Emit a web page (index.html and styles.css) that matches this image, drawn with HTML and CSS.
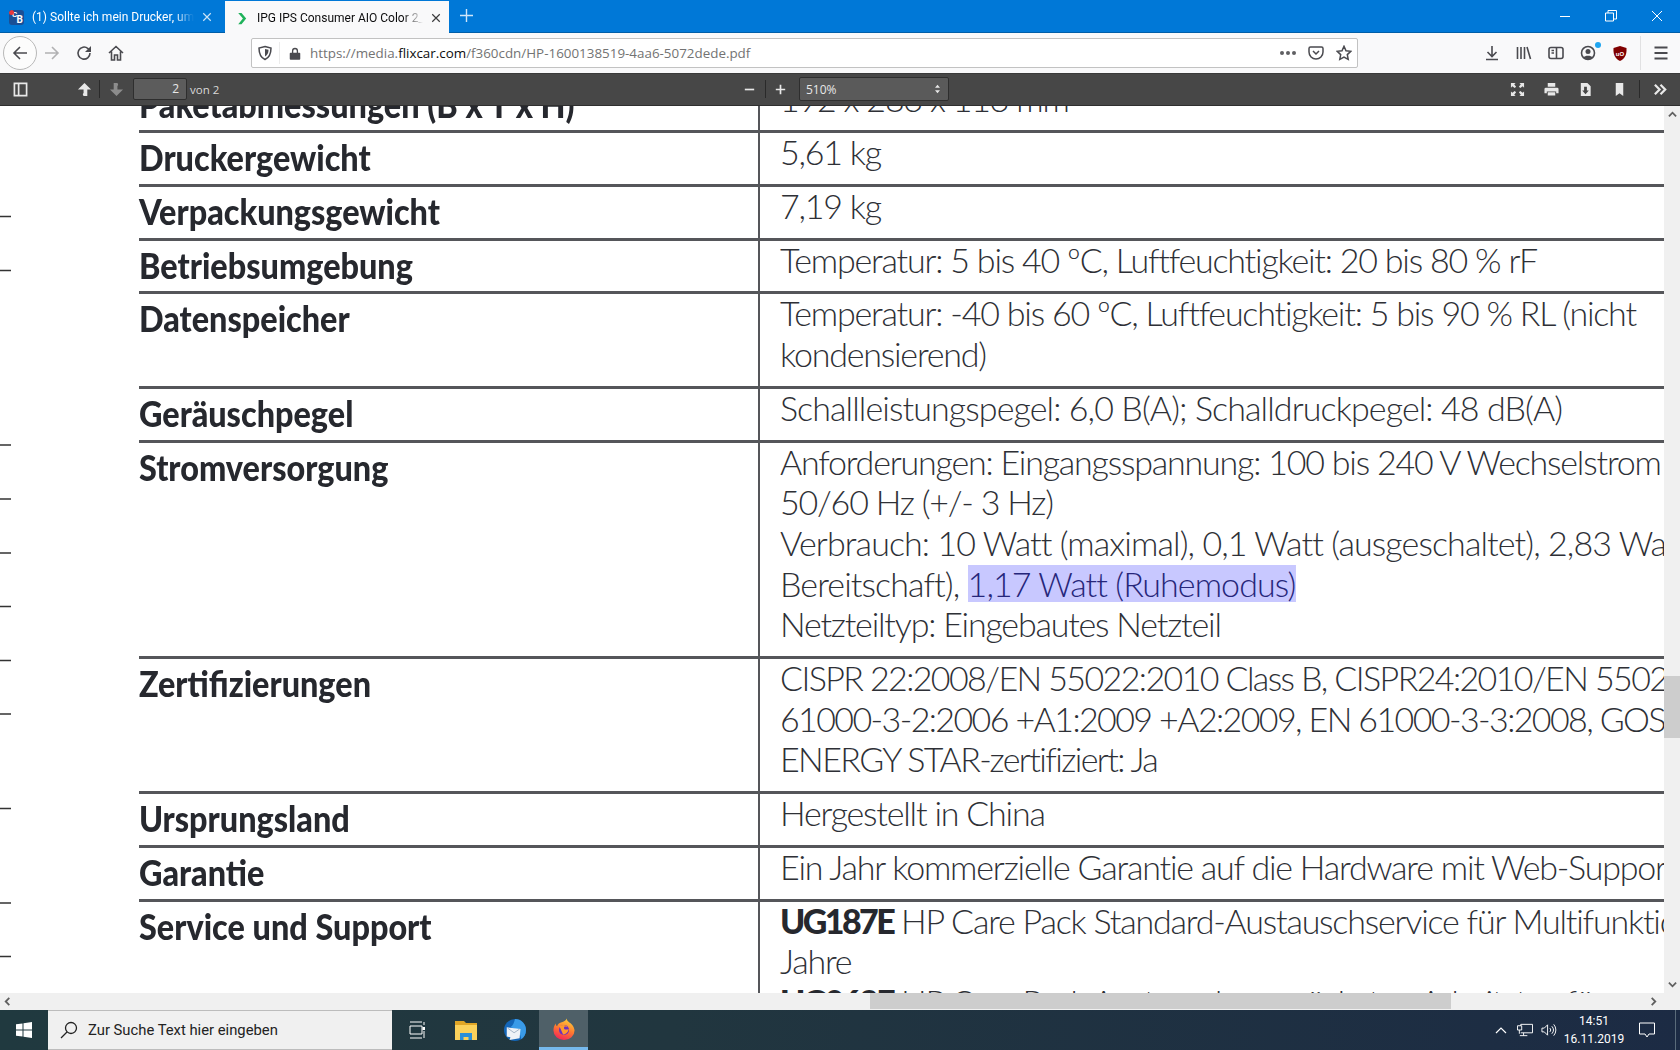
FILE: index.html
```html
<!DOCTYPE html>
<html lang="de">
<head>
    <meta charset="UTF-8">
    <title>IPG IPS Consumer AIO Color</title>
    <link rel="stylesheet" href="styles.css">
</head>
<body>
<div class="window">

    <div class="tabbar">
        <div class="tab">
            <span class="favicon-cb"><em>C</em><b>B</b><i></i></span>
            <span class="tab-title">(1) Sollte ich mein Drucker, um</span>
            <svg class="tab-close" viewBox="0 0 12 12"><path d="M1.5 1.5l9 9M10.5 1.5l-9 9"/></svg>
        </div>
        <div class="tab active">
            <svg class="favicon" viewBox="0 0 16 16"><path d="M4.500 2h3.500l5 6-5 6H4.500l5-6z" fill="#1fb25a" stroke="none"/></svg>
            <span class="tab-title">IPG IPS Consumer AIO Color 2_</span>
            <svg class="tab-close" viewBox="0 0 12 12"><path d="M1.5 1.5l9 9M10.5 1.5l-9 9"/></svg>
        </div>
        <svg class="new-tab" viewBox="0 0 14 14"><path d="M7 0v14M0 7h14"/></svg>
        <div class="win-controls">
            <div class="win-btn"><svg viewBox="0 0 12 12"><path d="M1 6.5h10"/></svg></div>
            <div class="win-btn"><svg viewBox="0 0 12 12"><path d="M.5 3h8v8h-8zM3 3V.5h8.5V9H8.5"/></svg></div>
            <div class="win-btn"><svg viewBox="0 0 12 12"><path d="M1 1l10 10M11 1L1 11"/></svg></div>
        </div>
    </div>

    <div class="navbar">
        <div class="nav-btn back"><svg viewBox="0 0 16 16"><path d="M15 8H2M8 2L2 8l6 6"/></svg></div>
        <div class="nav-btn off"><svg viewBox="0 0 16 16"><path d="M1 8h13M8 2l6 6-6 6"/></svg></div>
        <div class="nav-btn"><svg viewBox="0 0 16 16"><path d="M14 8a6 6 0 1 1-2-4.400L14 5"/><path class="fill" d="M15 1v6H9z"/></svg></div>
        <div class="nav-btn"><svg viewBox="0 0 16 16"><path d="M1 8l7-6.500L15 8M3.500 6.500V15H6.500V10h3v5h3V6.500"/></svg></div>

        <div class="urlbar">
            <svg class="url-icon" viewBox="0 0 16 16"><path d="M8 1.500l6 1.500c0 6-1.500 9.500-6 11.500C3.500 12.500 2 9 2 3z"/><path class="fill" d="M8 4l3.500.8C11.500 8 10.500 10 8 11.500z"/></svg>
            <span class="url-sep"></span>
            <svg class="url-lock" viewBox="0 0 16 16"><path d="M3 7h10a1 1 0 0 1 1 1v6a1 1 0 0 1-1 1H3a1 1 0 0 1-1-1V8a1 1 0 0 1 1-1zM4.500 7V5a3.500 3.500 0 0 1 7 0v2H10V5a2 2 0 0 0-4 0v2z"/></svg>
            <span class="url-text">https://media.<b>flixcar.com</b>/f360cdn/HP-1600138519-4aa6-5072dede.pdf</span>
            <span class="url-dots"><i></i><i></i><i></i></span>
            <svg class="url-icon" viewBox="0 0 16 16"><path d="M2.500 2h11A1.500 1.500 0 0 1 15 3.500V7a7 7 0 0 1-14 0V3.500A1.500 1.500 0 0 1 2.500 2zM5 6l3 3 3-3"/></svg>
            <svg class="url-icon" viewBox="0 0 16 16"><path d="M8 1.300l2 4.400 4.800.6-3.500 3.300.9 4.800L8 12.100l-4.200 2.300.9-4.800L1.200 6.300 6 5.700z"/></svg>
        </div>

        <div class="nav-btn tools-start"><svg viewBox="0 0 16 16"><path d="M8 1v10M3.500 7L8 11.500 12.500 7M2 14.500h12"/></svg></div>
        <div class="nav-btn"><svg viewBox="0 0 16 16"><path d="M1.500 2v12M5 2v12M8.500 2v12M11 2l3.500 12"/></svg></div>
        <div class="nav-btn"><svg viewBox="0 0 16 16"><rect x="1" y="2.500" width="14" height="11" rx="2"/><path d="M8.500 2.500v11M3.500 5.500h2.500M3.500 8h2.500"/></svg></div>
        <div class="nav-btn account">
            <svg viewBox="0 0 16 16"><circle cx="8" cy="8" r="6.500"/><circle class="fill" cx="8" cy="6.500" r="2.500"/><path class="fill" d="M3.500 12.500c1-2.500 8-2.500 9 0-2 2-7 2-9 0z"/></svg>
            <span class="account-dot"></span>
        </div>
        <div class="nav-btn"><svg class="ublock" viewBox="0 0 16 16"><path d="M8 .5l6.500 2c.3 6-1 10.500-6.500 13C2.500 13 1.200 8.500 1.500 2.500z"/><text x="8" y="10" text-anchor="middle">uO</text></svg></div>
        <span class="nav-sep"></span>
        <div class="nav-btn menu"><svg viewBox="0 0 16 16"><path d="M1.500 2.500h13M1.500 8h13M1.500 13.500h13"/></svg></div>
    </div>

    <div class="pdfbar">
        <div class="pdf-btn sidebar-btn"><svg viewBox="0 0 16 16"><path d="M1.500 1.500h13v13h-13zM6 2v12"/></svg></div>
        <div class="pdf-btn up-btn"><svg viewBox="0 0 16 16"><path class="fill" d="M8 1l7 7h-4v7H7c-1-1.500-1-3 0-3V8H1z"/></svg></div>
        <span class="pdf-sep"></span>
        <div class="pdf-btn dim"><svg viewBox="0 0 16 16"><path class="fill" d="M5 1h4c1 1.500 1 3 0 3v4h6l-7 7-7-7h4z"/></svg></div>
        <div class="page-input">2</div>
        <span class="page-count">von 2</span>

        <div class="pdf-btn zoom-out"><svg viewBox="0 0 16 16"><path d="M3 8h10"/></svg></div>
        <span class="pdf-sep"></span>
        <div class="pdf-btn zoom-in"><svg viewBox="0 0 16 16"><path d="M8 3v10M3 8h10"/></svg></div>
        <div class="zoom-select">
            <span>510%</span>
            <svg viewBox="0 0 8 12"><path class="fill" d="M4 1l3 3.500H1zM4 11L1 7.500h6z"/></svg>
        </div>

        <div class="pdf-right">
            <div class="pdf-btn"><svg viewBox="0 0 16 16"><path class="fill" d="M1 1h5L4.500 2.500 6.500 5 5 6.500 2.500 4.500 1 6zM15 1v5L13.500 4.500 11 6.500 9.500 5 11.500 2.500 10 1zM1 15v-5l1.500 1.500L5 9.500 6.500 11 4.500 13.500 6 15zM15 15h-5l1.500-1.500L9.500 11 11 9.500l2.500 2L15 10z"/></svg></div>
            <div class="pdf-btn"><svg viewBox="0 0 16 16"><path class="fill" d="M4 1h8v4H4zM2 6h12a1.500 1.500 0 0 1 1.500 1.500V12H13v-2H3v2H.5V7.500A1.500 1.500 0 0 1 2 6zM4 11h8v3.500H4z"/></svg></div>
            <div class="pdf-btn"><svg viewBox="0 0 16 16"><path class="fill" d="M3 1h7l3.500 3.500V15H3zM6.500 5v4H4.500L8 13l3.500-4H9.500V5z" fill-rule="evenodd"/></svg></div>
            <div class="pdf-btn"><svg viewBox="0 0 16 16"><path class="fill" d="M4 1h8v14l-4-3-4 3z"/></svg></div>
            <span class="pdf-sep"></span>
            <div class="pdf-btn more-btn"><svg viewBox="0 0 16 16"><path d="M2 3l5 5-5 5M8 3l5 5-5 5" stroke-width="2.400"/></svg></div>
        </div>
    </div>

    <div class="viewer">
        <div class="page">
            <svg class="page-ticks" viewBox="0 0 11 887" width="11" height="887"><path d="M0 110.500h11M0 164.500h11M0 339h11M0 393h11M0 447h11M0 500.500h11M0 554.500h11M0 608h11M0 702.500h11M0 797h11M0 850.500h11"/></svg>
            <div class="spec-table">
                <div class="spec-row">
                    <div class="spec-label">Paketabmessungen (B x T x H)</div>
                    <div class="spec-value"><p>192 x 283 x 113 mm</p></div>
                </div>
                <div class="spec-row">
                    <div class="spec-label">Druckergewicht</div>
                    <div class="spec-value"><p>5,61 kg</p></div>
                </div>
                <div class="spec-row">
                    <div class="spec-label">Verpackungsgewicht</div>
                    <div class="spec-value"><p>7,19 kg</p></div>
                </div>
                <div class="spec-row">
                    <div class="spec-label">Betriebsumgebung</div>
                    <div class="spec-value"><p>Temperatur: 5 bis 40 ºC, Luftfeuchtigkeit: 20 bis 80 % rF</p></div>
                </div>
                <div class="spec-row">
                    <div class="spec-label">Datenspeicher</div>
                    <div class="spec-value">
                        <p>Temperatur: -40 bis 60 ºC, Luftfeuchtigkeit: 5 bis 90 % RL (nicht</p>
                        <p>kondensierend)</p>
                    </div>
                </div>
                <div class="spec-row">
                    <div class="spec-label">Geräuschpegel</div>
                    <div class="spec-value"><p class="loose">Schallleistungspegel: 6,0 B(A); Schalldruckpegel: 48 dB(A)</p></div>
                </div>
                <div class="spec-row">
                    <div class="spec-label">Stromversorgung</div>
                    <div class="spec-value">
                        <p>Anforderungen: Eingangsspannung: 100 bis 240 V Wechselstrom</p>
                        <p>50/60 Hz (+/- 3 Hz)</p>
                        <p class="loose">Verbrauch: 10 Watt (maximal), 0,1 Watt (ausgeschaltet), 2,83 Watt</p>
                        <p class="loose">Bereitschaft), <span class="selected">1,17 Watt (Ruhemodus)</span></p>
                        <p>Netzteiltyp: Eingebautes Netzteil</p>
                    </div>
                </div>
                <div class="spec-row">
                    <div class="spec-label">Zertifizierungen</div>
                    <div class="spec-value">
                        <p class="tight">CISPR 22:2008/EN 55022:2010 Class B, CISPR24:2010/EN 55024</p>
                        <p class="tight">61000-3-2:2006 +A1:2009 +A2:2009, EN 61000-3-3:2008, GOST</p>
                        <p class="tight">ENERGY STAR-zertifiziert: Ja</p>
                    </div>
                </div>
                <div class="spec-row">
                    <div class="spec-label">Ursprungsland</div>
                    <div class="spec-value"><p>Hergestellt in China</p></div>
                </div>
                <div class="spec-row">
                    <div class="spec-label">Garantie</div>
                    <div class="spec-value"><p>Ein Jahr kommerzielle Garantie auf die Hardware mit Web-Support</p></div>
                </div>
                <div class="spec-row">
                    <div class="spec-label">Service und Support</div>
                    <div class="spec-value">
                        <p><b>UG187E</b> HP Care Pack Standard-Austauschservice für Multifunktions</p>
                        <p>Jahre</p>
                        <p><b>UG062E</b> HP Care Pack Austausch am nächsten Arbeitstag für</p>
                    </div>
                </div>
            </div>
        </div>
        <div class="vscroll">
            <svg class="arrow" viewBox="0 0 10 10"><path d="M1 7l4-4 4 4"/></svg>
            <div class="vthumb"></div>
            <svg class="arrow" viewBox="0 0 10 10"><path d="M1 3l4 4 4-4"/></svg>
        </div>
    </div>

    <div class="hscroll">
        <svg class="arrow" viewBox="0 0 10 10"><path d="M7 1L3 5l4 4"/></svg>
        <div class="htrack"><div class="hthumb"></div></div>
        <svg class="arrow" viewBox="0 0 10 10"><path d="M3 1l4 4-4 4"/></svg>
    </div>

    <div class="taskbar">
        <div class="start"><svg viewBox="0 0 16 16"><path d="M0 2.300L6.500 1.400V7.500H0zM7.500 1.200L16 0V7.500H7.500zM0 8.500h6.500v6.100L0 13.700zM7.500 8.500H16V16l-8.500-1.200z"/></svg></div>
        <div class="search">
            <svg viewBox="0 0 18 18"><circle cx="11" cy="7" r="5.500"/><path d="M7 11l-6 6"/></svg>
            <span>Zur Suche Text hier eingeben</span>
        </div>
        <div class="task-item"><svg class="taskview" viewBox="0 0 16 18"><path d="M1 1h12M1 17h12M1 5h12v8H1zM15 1v3M15 10v7"/><rect x="13.500" y="6" width="2.500" height="3" fill="#fff" stroke="none"/></svg></div>
        <div class="task-item">
            <svg viewBox="0 0 22 20"><path d="M0 1h9l2 2h11v17H0z" fill="#e0a526"/><path d="M0 5h22v15H0z" fill="#fbd15b"/><path d="M5 13h12v7h-3.500v-3h-5v3H5z" fill="#2b8fd8"/></svg>
        </div>
        <div class="task-item">
            <svg viewBox="0 0 24 24"><circle cx="12" cy="12" r="12" fill="#1466b8"/><path d="M12 0a12 12 0 0 1 12 12c0 5-2 8-5 10-1-6-4-11-12-13 3-2 4-5 5-9z" fill="#3a9be8"/><path d="M3 9l15 2-1 10-11 2 1-3-4-1z" fill="#eef2f7"/><path d="M4 10l7 5 6-4" fill="none" stroke="#9fb0c4"/></svg>
        </div>
        <div class="task-item running">
            <svg viewBox="0 0 24 24">
                <defs><linearGradient id="ff" x1="0.700" y1="0" x2="0.300" y2="1"><stop offset="0" stop-color="#ffd23a"/><stop offset="0.500" stop-color="#ff7a2f"/><stop offset="1" stop-color="#f2225a"/></linearGradient></defs>
                <path d="M15 .5c0 3 3 4 5 6 3 3 3.500 6.500 3.500 7A11.500 10.500 0 0 1 .5 13.500C.5 10 1.500 8 3 6c0 1.500.5 2.500 1.500 3 .5-3 3-4 5-4.500C11.500 4 14 3 15 .5z" fill="url(#ff)"/>
                <circle cx="12" cy="13" r="5.500" fill="#6a2fc0"/>
                <path d="M7 9c3-2 7-2 9 1-2-1-4-1-4 1s3 2 5 1c0 3-3 6-6 6" fill="#ff9a2e"/>
            </svg>
        </div>
        <div class="tray">
            <svg class="tray-icon caret" viewBox="0 0 12 8"><path d="M1 7l5-5 5 5"/></svg>
            <svg class="tray-icon" viewBox="0 0 17 14"><path d="M4 2.500V1h12.500v9H4M7 10v3M3 13h8M.5 2.500H5V7H.5zM2.500 7v4"/></svg>
            <svg class="tray-icon speaker" viewBox="0 0 17 14"><path d="M1 5h2.500L7 1.500v11L3.500 9H1zM9.500 5a3 3 0 0 1 0 4M11.500 3a6 6 0 0 1 0 8M13.500 1a9 9 0 0 1 0 12"/></svg>
            <div class="clock"><span>14:51</span><span>16.11.2019</span></div>
            <svg class="tray-icon notify" viewBox="0 0 16 16"><path d="M.5 1h15v11H10l-2 3-2-3H.5z"/></svg>
            <span class="show-desktop"></span>
        </div>
    </div>

</div>
</body>
</html>
```

FILE: styles.css
```css
* { box-sizing: border-box; }
html, body { margin: 0; height: 100%; overflow: hidden; }
body { font-family: Roboto, "Open Sans", sans-serif; background: #fff; }
p { margin: 0; }
svg { display: block; fill: none; stroke: currentColor; }
svg .fill { fill: currentColor; stroke: none; }

.window { display: flex; flex-direction: column; height: 1050px; }

/* tab strip */
.tabbar { display: flex; align-items: flex-end; height: 33px; background: #0078d7; border-bottom: 1px solid #005ea8; flex: none; }
.tab { display: flex; align-items: center; width: 225px; height: 32px; padding-left: 9px; padding-top: 2px; color: #fff; font-size: 12px; position: relative; }
.tab.active { width: 224px; height: 32px; background: #f9f9fa; color: #0c0c0d; margin-bottom: -1px; padding-left: 9px; }
.favicon, .favicon-cb { width: 15px; height: 15px; flex: none; }
.favicon-cb { background: #1a4f96; border-radius: 3px; color: #fff; position: relative; overflow: hidden; }
.favicon-cb em { position: absolute; left: 3px; top: 0; font-style: normal; font-size: 8px; line-height: 9px; font-weight: 700; }
.favicon-cb b { position: absolute; right: 1px; bottom: 0; font-size: 10px; line-height: 10px; }
.favicon-cb i { position: absolute; left: 0; top: 0; width: 5px; height: 5px; border-radius: 50%; background: #e8383d; }
.tab-title { margin-left: 8px; width: 162px; white-space: nowrap; overflow: hidden; -webkit-mask-image: linear-gradient(to right, #000 88%, transparent); mask-image: linear-gradient(to right, #000 88%, transparent); }
.tab.active .tab-title { margin-left: 8px; width: 166px; }
.tab-close { width: 10px; height: 10px; margin-left: 8px; stroke-width: 1.400; opacity: .8; }
.new-tab { width: 13px; height: 13px; margin: 0 0 10px 11px; color: #cfe6fa; stroke-width: 1.500; }
.win-controls { display: flex; margin-left: auto; height: 32px; }
.win-btn { width: 46px; display: flex; align-items: center; justify-content: center; color: #fff; }
.win-btn svg { width: 12px; height: 12px; }

/* nav toolbar */
.navbar { display: flex; align-items: center; height: 40px; padding-left: 4px; background: #f9f9fa; color: #4a4a4f; flex: none; }
.nav-btn { width: 32px; height: 32px; display: flex; align-items: center; justify-content: center; position: relative; flex: none; }
.nav-btn svg { width: 16px; height: 16px; stroke-width: 1.600; }
.nav-btn.back { border: 1px solid #b8b8b8; border-radius: 50%; background: #fcfcfc; height: 34px; width: 34px; margin: 0 -1px; }
.nav-btn.off { color: #b1b1b3; }
.urlbar { display: flex; align-items: center; width: 1107px; height: 30px; margin-left: 119px; padding: 0 5px; background: #fff; border: 1px solid #c2c2c2; border-radius: 2px; flex: none; }
.url-icon { width: 16px; height: 16px; stroke-width: 1.500; flex: none; }
.url-sep { width: 1px; height: 22px; margin: 0 0 0 6px; background: #ececec; }
.url-lock { width: 14px; height: 15px; margin-left: 8px; fill: currentColor; stroke: none; fill-rule: evenodd; }
.url-text { margin-left: 8px; font-size: 13.400px; color: #737373; white-space: nowrap; font-family: "Open Sans", sans-serif; flex: 1; }
.url-text b { font-weight: 400; color: #0c0c0d; }
.url-dots { display: flex; gap: 2px; margin-right: 12px; }
.url-dots i { width: 4px; height: 4px; border-radius: 50%; background: #5f5f62; }
.urlbar .url-icon:last-child { margin-left: 12px; }
.tools-start { margin-left: 118px; }
.account-dot { position: absolute; right: 3px; top: 5px; width: 6px; height: 6px; border-radius: 50%; background: #1fa5f0; }
.ublock { fill: #800000; stroke: none; }
.ublock path { fill: #800000; }
.ublock text { fill: #fff; font-size: 6px; font-weight: 700; font-family: "Liberation Sans", sans-serif; }
.nav-btn .ublock { width: 16px; height: 17px; }
.nav-sep { width: 1px; height: 34px; margin: 0 4px; background: #e1e1e2; }
.menu { width: 32px; }
.menu svg { stroke-width: 2; }

/* pdf.js toolbar */
.pdfbar { display: flex; align-items: center; height: 33px; padding: 0 4px; background: #474747; box-shadow: inset 0 1px 0 #3a3a3a; border-bottom: 1px solid #2f2f2f; color: #e8e8e8; flex: none; font-family: "Open Sans", sans-serif; }
.pdf-btn { width: 32px; height: 24px; display: flex; align-items: center; justify-content: center; flex: none; }
.pdf-btn svg { width: 15px; height: 15px; stroke-width: 1.800; }
.pdf-btn.dim { color: #8c8c8c; }
.pdf-sep { width: 1px; height: 18px; background: #2a2a2a; flex: none; }
.up-btn { margin-left: 33px; width: 30px; }
.page-input { width: 54px; height: 22px; margin-left: 1px; padding-right: 7px; background: #5c5c5c; border: 1px solid #2e2e2e; border-radius: 2px; color: #e8e8e8; font-size: 12px; line-height: 20px; text-align: right; }
.page-count { width: 30px; margin-left: 3px; font-size: 11.500px; color: #d9d9d9; white-space: nowrap; }
.zoom-out { margin-left: 513px; }
.zoom-in { margin-left: -2px; }
.zoom-select { display: flex; align-items: center; justify-content: space-between; width: 150px; height: 24px; margin-left: 3px; padding: 0 7px 0 6px; background: #5a5a5a; border: 1px solid #2e2e2e; border-radius: 2px; font-size: 12px; }
.zoom-select svg { width: 7px; height: 10px; }
.pdf-right { display: flex; align-items: center; margin-left: auto; }
.pdf-right .pdf-btn { width: 34px; }
.pdf-right .pdf-sep { margin-left: 3px; }
.pdf-right .more-btn { width: 32px; margin-left: 4px; }

/* document area */
.viewer { display: flex; flex: 1; min-height: 0; }
.page { flex: 1; min-width: 0; overflow: hidden; position: relative; background: #fff; }
.page-ticks { position: absolute; left: 0; top: 0; color: #333; stroke-width: 1.500; }
.spec-table { margin: -26.400px 0 0 139px; font-family: Lato, sans-serif; }
.spec-row { display: flex; border-bottom: 3px solid #55565a; white-space: nowrap; }
.spec-label { width: 619px; flex: none; padding-top: 4px; font-family: Lato, sans-serif; font-weight: 900; font-size: 36px; line-height: 40px; color: #26282e; transform: scaleX(.9); transform-origin: left; }
.spec-value { flex: 1; min-width: 0; padding: 0 0 11px 20px; border-left: 2px solid #55565a; font-weight: 300; font-size: 34px; line-height: 40.700px; letter-spacing: -1.200px; color: #2e3036; overflow: hidden; }
.spec-value p:first-child { margin-top: -1px; }
.spec-value .loose { letter-spacing: -.9px; }
.spec-value .tight { letter-spacing: -1.600px; }
.spec-value b { font-weight: 900; color: #26282e; letter-spacing: -2.600px; }
.selected { background: linear-gradient(#c8c8ff, #c8c8ff) center / 100% 37px no-repeat; color: #26267a; }

/* scrollbars */
.vscroll { width: 16px; flex: none; background: #f0f0f0; display: flex; flex-direction: column; align-items: center; justify-content: space-between; padding: 4px 0; position: relative; color: #606060; }
.vthumb { position: absolute; left: 0; top: 570px; width: 16px; height: 62px; background: #cdcdcd; }
.arrow { width: 9px; height: 9px; stroke-width: 2; color: #606060; flex: none; }
.hscroll { display: flex; align-items: center; height: 17px; padding: 0 22px 0 3px; background: #f0f0f0; flex: none; }
.htrack { flex: 1; height: 100%; margin: 0 6px 0 6px; display: flex; padding-left: 852px; }
.hthumb { width: 581px; height: 16px; background: #cdcdcd; }

/* windows taskbar */
.taskbar { display: flex; align-items: stretch; height: 40px; background: linear-gradient(to right, #20393f, #21363f 40%, #1c2b44); color: #fff; flex: none; }
.start { width: 48px; display: flex; align-items: center; justify-content: center; }
.start svg { width: 16px; height: 16px; fill: #fff; stroke: none; }
.search { display: flex; align-items: center; width: 344px; padding-left: 12px; background: #f0f0f0; border-top: 1px solid #bcbcbc; border-bottom: 1px solid #bcbcbc; color: #222; font-size: 14.800px; }
.search svg { width: 18px; height: 18px; stroke-width: 1.300; }
.search span { margin-left: 10px; white-space: nowrap; }
.task-item { width: 49px; display: flex; align-items: center; justify-content: center; }
.task-item svg { width: 22px; height: 22px; stroke: none; }
.task-item .taskview { width: 16px; height: 18px; stroke: #fff; stroke-width: 1; }
.task-item.running { background: #4f6068; border-bottom: 3px solid #76b9ed; }
.tray { display: flex; align-items: center; margin-left: auto; }
.tray-icon { width: 16px; height: 14px; stroke-width: 1; color: #fff; }
.caret { width: 12px; height: 8px; margin-right: 10px; stroke-width: 1.200; }
.speaker { margin-left: 8px; }
.clock { display: flex; flex-direction: column; align-items: center; width: 62px; margin-left: 6px; font-size: 12px; line-height: 18px; }
.notify { width: 16px; height: 16px; margin-left: 14px; }
.show-desktop { width: 1px; height: 100%; margin: 0 4px 0 20px; background: #5a6b7a; }
```
